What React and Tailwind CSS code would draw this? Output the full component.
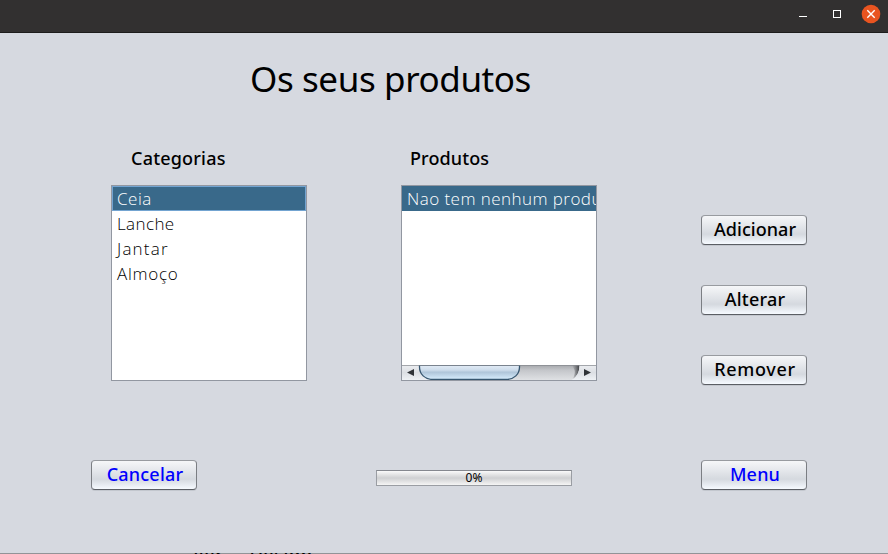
const categories = [
  { name: "Ceia", spacing: "tracking-[0.5px]" },
  { name: "Lanche", spacing: "tracking-[0.4px]" },
  { name: "Jantar", spacing: "tracking-[1.2px]" },
  { name: "Almoço", spacing: "tracking-[0.75px]" },
];

function Button({ children, color = "text-black", spacing = "tracking-[0.2px]" }) {
  return (
    <button
      className={`flex h-[30px] w-[106px] items-center justify-center rounded-[4px] border border-t-[#989ba0] border-x-[#7b7e83] border-b-[#5b5e64] bg-linear-to-b from-[#f6f7f9] via-[#d5d9df] via-65% to-[#f6faff] pb-[2px] pl-[2px] text-[18px] leading-[26px] font-medium whitespace-nowrap shadow-[0_1px_0_#c3c7ce] ${color} ${spacing}`}
    >
      {children}
    </button>
  );
}

function TitleBar() {
  return (
    <header className="flex h-[33px] items-start justify-end border-b border-[#1d1c1c] bg-[#323030]">
      <svg className="h-[32px] w-[108px]" viewBox="0 0 108 32" fill="none">
        <path d="M19 16.5h8" stroke="#fff" />
        <rect x="53.5" y="10.5" width="7" height="7" stroke="#fff" />
        <circle cx="91" cy="14" r="9.3" fill="#e95420" />
        <path d="M87.3 10.3l7.4 7.4M94.7 10.3l-7.4 7.4" stroke="#fff" strokeWidth="1.4" />
      </svg>
    </header>
  );
}

function ScrollBar() {
  return (
    <svg className="h-[15px] w-[194px] shrink-0" viewBox="0 0 194 15">
      <defs>
        <linearGradient id="track" x1="0" y1="0" x2="0" y2="1">
          <stop offset="0" stopColor="#a5a7ab" />
          <stop offset="0.35" stopColor="#c4c6ca" />
          <stop offset="1" stopColor="#dfe1e4" />
        </linearGradient>
        <linearGradient id="thumb" x1="0" y1="0" x2="0" y2="1">
          <stop offset="0" stopColor="#e4edf7" />
          <stop offset="0.35" stopColor="#cddceb" />
          <stop offset="0.5" stopColor="#afc5d9" />
          <stop offset="1" stopColor="#d8eefe" />
        </linearGradient>
        <linearGradient id="cap" x1="0" y1="0" x2="0" y2="1">
          <stop offset="0" stopColor="#eceef1" />
          <stop offset="0.5" stopColor="#dcdfe4" />
          <stop offset="1" stopColor="#eef1f5" />
        </linearGradient>
        <linearGradient id="edge" x1="0" y1="0" x2="1" y2="0">
          <stop offset="0" stopColor="#55575b" stopOpacity="0" />
          <stop offset="1" stopColor="#3c3e42" />
        </linearGradient>
      </defs>
      <rect width="194" height="15" fill="url(#track)" />
      <path d="M0 0h17q0 11 12 15H0z" fill="url(#cap)" />
      <path d="M170 0h7.500q0 10-7 14 3-5 2-9z" fill="url(#edge)" />
      <path d="M194 0h-16.500q0 11-8 15H194z" fill="url(#cap)" />
      <path d="M17.500 0v2c0 7 5 12.500 14 12.500h72c9 0 14-5.500 14-12.500V0z" fill="url(#thumb)" stroke="#37566f" strokeWidth="1.300" />
      <path d="M0 .5h194" stroke="#85888d" strokeOpacity=".7" />
      <path d="M5 7.500l7-3.500v7zM189 7.500l-7-3.500v7z" fill="#303338" />
    </svg>
  );
}

export default function App() {
  return (
    <div className="flex h-[554px] w-[888px] flex-col overflow-hidden bg-[#d6d9e0] font-['Noto_Sans','Open_Sans',sans-serif] text-black">
      <TitleBar />
      <main className="flex h-[520px] shrink-0 flex-col">
        <h1 className="mt-[22px] ml-[250px] h-[48px] text-[35px] leading-[48px] tracking-[-0.4px] whitespace-nowrap">
          Os seus produtos
        </h1>
        <div className="mt-[42px] ml-[111px] flex h-[235px]">
          <section className="w-[196px]">
            <h2 className="h-[40px] pl-[20px] text-[18px] leading-[26px] font-medium tracking-[0.2px]">Categorias</h2>
            <ul className="h-[196px] border border-[#9297a1] bg-white font-['Open_Sans','Noto_Sans',sans-serif] text-[17px] font-light">
              {categories.map(({ name, spacing }, i) => (
                <li
                  key={name}
                  className={`h-[25px] pl-[5px] leading-[26px] ${spacing} ${
                    i === 0 ? "bg-[#39698a] text-white ring-1 ring-[#73a4d1] ring-inset" : ""
                  }`}
                >
                  {name}
                </li>
              ))}
            </ul>
          </section>
          <section className="ml-[94px] w-[196px]">
            <h2 className="h-[40px] pl-[9px] text-[18px] leading-[26px] font-medium tracking-[0.1px]">Produtos</h2>
            <div className="flex h-[196px] flex-col border border-[#9297a1] bg-white">
              <ul className="flex-1 overflow-hidden font-['Open_Sans','Noto_Sans',sans-serif] text-[17px] font-light tracking-[0.45px]">
                <li className="h-[25px] bg-[#39698a] pl-[5px] leading-[26px] whitespace-nowrap text-white">
                  Nao tem nenhum produto
                </li>
              </ul>
              <ScrollBar />
            </div>
          </section>
          <div className="mt-[70px] ml-[104px] flex flex-col gap-[40px]">
            <Button spacing="tracking-[0.05px]">Adicionar</Button>
            <Button>Alterar</Button>
            <Button spacing="tracking-[0.7px]">Remover</Button>
          </div>
        </div>
        <footer className="mt-[80px] ml-[91px] flex">
          <Button color="text-[#0000ff]">Cancelar</Button>
          <div className="mt-[10px] ml-[179px] h-[16px] w-[196px] border border-[#9a9da3] border-t-[#85888f] bg-linear-to-b from-[#fafafa] via-[#cfd0d2] via-50% to-[#f5f5f5] text-center text-[12px] leading-[14px] tracking-[0.2px]">
            0%
          </div>
          <div className="ml-[129px]">
            <Button color="text-[#0000ff]">Menu</Button>
          </div>
        </footer>
      </main>
      <div className="flex h-px shrink-0 gap-[26px] overflow-hidden bg-[#929397] pl-[193px] text-[18px] leading-[3px] font-medium tracking-[0.6px]">
        <span>Ver</span>
        <span>Design</span>
      </div>
    </div>
  );
}
